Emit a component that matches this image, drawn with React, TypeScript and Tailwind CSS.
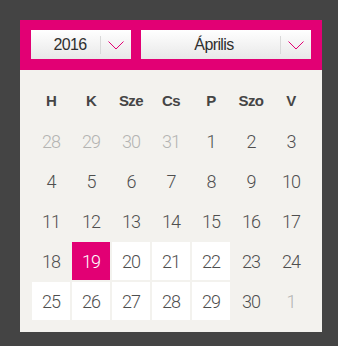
import React from "react";

const days = ["H", "K", "Sze", "Cs", "P", "Szo", "V"];

type Day = { n: number; muted?: boolean; white?: boolean; active?: boolean };

const weeks: Day[][] = [
    [{ n: 28, muted: true }, { n: 29, muted: true }, { n: 30, muted: true }, { n: 31, muted: true }, { n: 1 }, { n: 2 }, { n: 3 }],
    [{ n: 4 }, { n: 5 }, { n: 6 }, { n: 7 }, { n: 8 }, { n: 9 }, { n: 10 }],
    [{ n: 11 }, { n: 12 }, { n: 13 }, { n: 14 }, { n: 15 }, { n: 16 }, { n: 17 }],
    [{ n: 18 }, { n: 19, active: true }, { n: 20, white: true }, { n: 21, white: true }, { n: 22, white: true }, { n: 23 }, { n: 24 }],
    [{ n: 25, white: true }, { n: 26, white: true }, { n: 27, white: true }, { n: 28, white: true }, { n: 29, white: true }, { n: 30 }, { n: 1, muted: true }],
];

const Chevron = () => (
    <svg width="16" height="9" viewBox="0 0 16 9" fill="none">
        <path d="M0.5 0.5 L8 8 L15.5 0.5" stroke="#e20074" strokeWidth="1" />
    </svg>
);

const Select = ({ label, width, pad }: { label: string; width: string; pad: string }) => (
    <div className={`${width} h-[29px] flex bg-linear-to-b from-white to-[#e8e8e8]`}>
        <div className={`flex-1 flex items-center justify-center text-[16px] tracking-[-0.6px] text-[#2f2f2f] font-['Liberation_Sans',sans-serif] ${pad}`}>
            {label}
        </div>
        <div className="w-[31px] flex items-center">
            <div className="w-px h-[18px] bg-[#d9d9d9]" />
            <div className="flex-1 flex justify-center pt-[1px]">
                <Chevron />
            </div>
        </div>
    </div>
);

export default function App() {
    return (
        <div className="w-[338px] h-[346px] bg-[#444444] pt-5 pl-5">
            <div className="w-[302px]">
                <div className="h-[50px] bg-[#e20074] px-[11px] pt-[10px] flex gap-[10px]">
                    <Select label="2016" width="w-[100px]" pad="pl-[9px]" />
                    <Select label="Április" width="w-[170px]" pad="pl-[7px]" />
                </div>
                <div className="bg-[#f3f2ee] p-3 grid grid-cols-7 gap-[2px]">
                    {days.map((d) => (
                        <div
                            key={d}
                            className="h-[38px] flex items-center justify-center text-[15px] font-bold tracking-[-0.6px] text-[#454545] font-['Liberation_Sans',sans-serif]"
                        >
                            {d}
                        </div>
                    ))}
                    {weeks.flat().map((d, i) => (
                        <div
                            key={i}
                            className={`h-[38px] flex items-center justify-center text-[18px] font-light tracking-[-1px] font-['Roboto',sans-serif] ${
                                d.active
                                    ? "bg-[#e20074] text-white"
                                    : d.muted
                                    ? "text-[#b4b4b2]"
                                    : d.white
                                    ? "bg-white text-[#4f4f4f]"
                                    : "text-[#4f4f4f]"
                            }`}
                        >
                            {d.n}
                        </div>
                    ))}
                </div>
            </div>
        </div>
    );
}
